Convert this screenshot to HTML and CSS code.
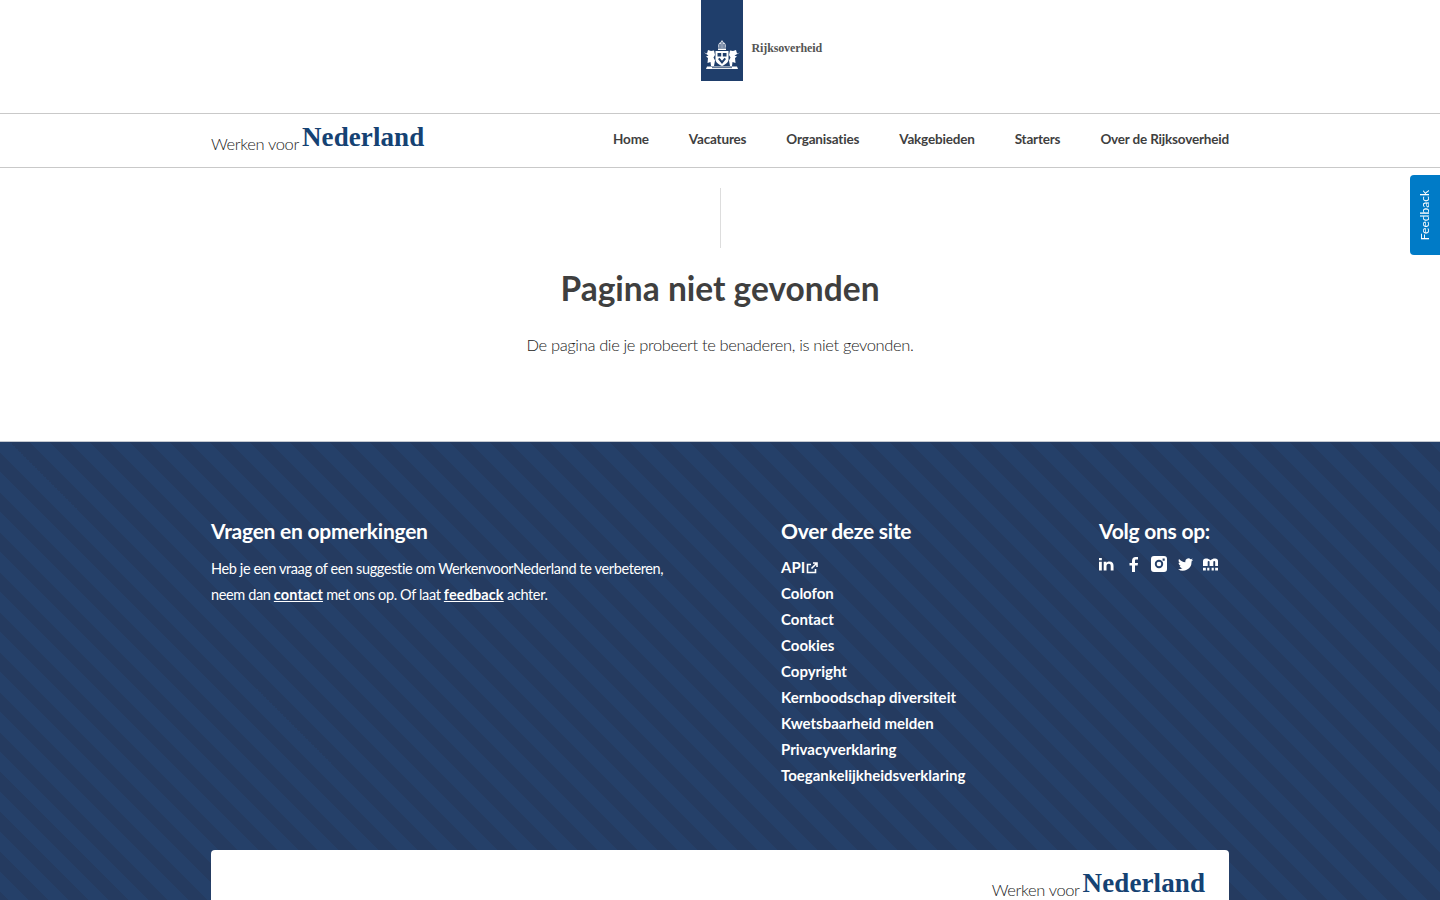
FILE: index.html
```html
<!DOCTYPE html>
<html lang="nl">
<head>
<meta charset="utf-8">
<title>Pagina niet gevonden</title>
<link rel="stylesheet" href="styles.css">
</head>
<body>
<div class="page">
  <header class="top">
    <div class="logo">
      <div class="lint">
        <svg class="crest" viewBox="0 0 36 32" width="36" height="32" aria-hidden="true">
          <path class="w soft" d="M14.500 9C13.500 6.500 14.500 4 16.500 3.300L18 1l1.500 2.300c2 .7 3 3.200 2 5.700z"/>
          <path class="b" d="M17.600 3h.8v6h-.8zM15.500 5h1v4h-1zM19.500 5h1v4h-1z"/>
          <path class="w" d="M14 9.500h8V11h-8z"/>
          <path class="w" d="M11.500 12h13v8.500c0 3-3.200 5-6.500 6.500-3.300-1.500-6.500-3.500-6.500-6.500z"/>
          <path class="b" d="M13.500 14h3.700v3.500h-3.700zM18.800 14h3.700v3.500h-3.700zM14 20l4 5 4-5-1.500-1.200-2.500 3-2.500-3z"/>
          <path class="w" d="M0 13.500l3 1 1-3.500 3 1 3-.5L11 16l-1.500 2.500 1.500 3-1 5.500H7L6.500 23l-3 1 .5-5-2-1.500 2.500-1z"/>
          <path class="w" d="M36 13.500l-3 1-1-3.500-3 1-3-.5L25 16l1.500 2.500-1.500 3 1 5.500h2l.5-4 3 1-.5-5 2-1.500-2.500-1z"/>
          <path class="w" d="M3 27.500h30l1 2.500H2z"/>
          <path class="b" d="M8 28.300h20v.8H8z"/>
        </svg>
      </div>
      <span class="logo-word">Rijksoverheid</span>
    </div>
  </header>
  <nav class="nav">
    <div class="wrap nav-in">
      <a class="brand" href="#"><span class="brand-a">Werken voor</span> <span class="brand-b">Nederland</span></a>
      <ul class="menu">
        <li>Home</li>
        <li>Vacatures</li>
        <li>Organisaties</li>
        <li>Vakgebieden</li>
        <li>Starters</li>
        <li>Over de Rijksoverheid</li>
      </ul>
    </div>
  </nav>
  <main class="main">
    <div class="rule"></div>
    <h1>Pagina niet gevonden</h1>
    <p>De pagina die je probeert te benaderen, is niet gevonden.</p>
  </main>
  <footer class="foot">
    <div class="wrap cols">
      <section class="col-a">
        <h2>Vragen en opmerkingen</h2>
        <p>Heb je een vraag of een suggestie om WerkenvoorNederland te verbeteren,<br>neem dan <a href="#">contact</a> met ons op. Of laat <a href="#">feedback</a> achter.</p>
      </section>
      <section class="col-b">
        <h2>Over deze site</h2>
        <ul>
          <li>API<svg class="ext" viewBox="0 0 12 12" width="12" height="12" aria-hidden="true"><path d="M9.500 7v3.500h-8v-8H5M7 1h4v4M11 1L5.500 6.500"/></svg></li>
          <li>Colofon</li>
          <li>Contact</li>
          <li>Cookies</li>
          <li>Copyright</li>
          <li>Kernboodschap diversiteit</li>
          <li>Kwetsbaarheid melden</li>
          <li>Privacyverklaring</li>
          <li>Toegankelijkheidsverklaring</li>
        </ul>
      </section>
      <section class="col-c">
        <h2>Volg ons op:</h2>
        <div class="social">
          <svg class="s-in" viewBox="0 0 16 14" width="15" height="14" aria-hidden="true"><path d="M0 4.500h3V14H0zM0 .5h3v2.600H0zM5 4.500h3v1.300C8.700 4.800 9.800 4.300 11.200 4.300c3 0 4.300 1.800 4.300 4.700v5h-3V9.300c0-1.600-.6-2.500-2-2.500S8 7.700 8 9.300V14H5z"/></svg>
          <svg class="s-fb" viewBox="0 0 9 15" width="9" height="15" aria-hidden="true"><path d="M3 15V8.500H.5V6H3V4c0-2.500 1.400-4 3.700-4H9v2.600H7.300C6.300 2.600 6 3 6 4v2h3l-.4 2.500H6V15z"/></svg>
          <svg class="s-ig" viewBox="0 0 16 16" width="16" height="16" aria-hidden="true"><path fill-rule="evenodd" d="M3 0h10a3 3 0 0 1 3 3v10a3 3 0 0 1-3 3H3a3 3 0 0 1-3-3V3a3 3 0 0 1 3-3zM8 3.800a4.200 4.200 0 1 0 0 8.400 4.200 4.200 0 0 0 0-8.400zM8 5.700a2.300 2.300 0 1 1 0 4.600 2.300 2.300 0 0 1 0-4.600zM11.600 2.500v2.200h2.100V2.500z"/></svg>
          <svg class="s-tw" viewBox="0 0 16 13" width="15" height="13" aria-hidden="true"><path d="M16 1.500c-.6.300-1.200.5-1.900.5.700-.4 1.200-1 1.400-1.800-.6.400-1.300.7-2 .8A3.300 3.300 0 0 0 7.900 4C5.200 3.900 2.800 2.600 1.100.6c-.9 1.500-.4 3.400 1 4.400-.5 0-1-.2-1.500-.4 0 1.600 1.100 3 2.600 3.300-.5.100-1 .2-1.500.1.400 1.300 1.600 2.200 3.100 2.300A6.600 6.600 0 0 1 0 11.600 9.300 9.300 0 0 0 14.400 3.300c.6-.5 1.200-1.100 1.600-1.800z"/></svg>
          <svg class="s-mu" viewBox="0 0 16 13" width="15" height="13" aria-hidden="true"><path d="M0 8V3a3 3 0 0 1 3-3h.5c1.500 0 2.900.6 4.500 2 1.600-1.400 3-2 4.500-2h.5a3 3 0 0 1 3 3v5h-3V3.500c0-.5-.4-.8-1-.8s-1 .3-1 .8V8H7V3.500c0-.5-.4-.8-1-.8s-1 .3-1 .8V8zM0 10h3v3H0zM4.500 10h2.300v3H4.500zM9.200 10h2.300v3H9.200zM13 10h3v3h-3z"/></svg>
        </div>
      </section>
    </div>
    <div class="wrap card">
      <a class="brand" href="#"><span class="brand-a">Werken voor</span> <span class="brand-b">Nederland</span></a>
    </div>
  </footer>
  <a class="feedback" href="#"><span>Feedback</span></a>
</div>
</body>
</html>
```
FILE: styles.css
```css
* { box-sizing: border-box; }
html, body { margin: 0; padding: 0; }
body { font-family: Lato, "Noto Sans", sans-serif; color: #3c3c3c; background: #fff; }
a { color: inherit; }
ul { list-style: none; margin: 0; padding: 0; }

.page { height: 100vh; overflow: hidden; display: flex; flex-direction: column; position: relative; }
.wrap { width: 1018px; margin: 0 auto; }

.top { height: 114px; flex: none; border-bottom: 1px solid #c9c9c9; display: flex; justify-content: center; }
.logo { display: flex; align-items: flex-start; margin-left: 83px; width: 122px; }
.lint { width: 42px; height: 81px; background: #1f3e6b; flex: none; display: flex; justify-content: center; padding-top: 39px; }
.crest { filter: blur(0.35px); }
.crest .w { fill: #fff; }
.crest .soft { fill: #d5dbe5; }
.crest .b { fill: #1f3e6b; }
.logo-word { font-family: "Liberation Serif", serif; font-size: 12px; color: #555; margin: 41px 0 0 9px; font-weight: 700; letter-spacing: -0.12px; }

.nav { height: 54px; flex: none; border-bottom: 1px solid #c9c9c9; }
.nav-in { display: flex; justify-content: space-between; height: 100%; align-items: center; }
.brand { text-decoration: none; display: inline-flex; align-items: baseline; gap: 3px; white-space: nowrap; }
.brand-a { font-size: 16.500px; font-weight: 300; color: #222; position: relative; top: 4px; letter-spacing: -0.35px; }
.brand-b { font-family: "Liberation Serif", serif; font-weight: 700; font-size: 27px; color: #154273; letter-spacing: 0.1px; }
.nav .brand { margin-top: -7px; }
.menu { display: flex; gap: 40px; font-size: 13.500px; font-weight: 700; color: #3f3f3f; letter-spacing: -0.18px; padding-bottom: 4px; }

.main { height: 273px; flex: none; display: flex; flex-direction: column; align-items: center; padding-top: 20px; }
.rule { width: 1px; height: 60px; background: #ddd; }
.main h1 { margin: 17px 0 0; font-size: 33.500px; line-height: 46px; font-weight: 700; color: #3f3f3f; }
.main p { margin: 22px 0 0; font-size: 16.500px; line-height: 24px; font-weight: 300; color: #222; letter-spacing: -0.36px; }

.foot {
  flex: 1; color: #fff; border-top: 1px solid #c4c8cf;
  background: repeating-linear-gradient(45deg, #254069 0 5.660px, #253b60 5.660px 19.800px, #254069 19.800px 28.284px);
  padding-top: 74px;
}
.cols { display: flex; height: 334px; }
.foot h2 { margin: 0; font-size: 21px; line-height: 30px; font-weight: 700; letter-spacing: -0.25px; }
.foot p { margin: 10px 0 0; font-size: 14.500px; line-height: 26px; letter-spacing: -0.37px; }
.foot p a { font-weight: 700; letter-spacing: 0.1px; }
.col-a { width: 570px; }
.col-b { width: 318px; }
.col-b ul { margin-top: 8px; font-size: 15px; line-height: 26px; font-weight: 700; }
.ext { margin-left: 1px; fill: none; stroke: #fff; stroke-width: 1.600; vertical-align: -1px; }
.social { display: flex; align-items: center; margin-top: 10px; }
.social svg { fill: #fff; display: block; flex: none; }
.s-fb { margin-left: 15px; }
.s-ig { margin-left: 13px; }
.s-tw { margin-left: 11px; }
.s-mu { margin-left: 10px; }

.card { height: 70px; background: #fff; border-radius: 4px 4px 0 0; display: flex; justify-content: flex-end; padding: 18px 24px 0 0; align-items: flex-start; }

.feedback { position: absolute; right: 0; top: 175px; width: 30px; height: 80px; background: #007bc7; border-radius: 4px 0 0 4px; color: #fff; text-decoration: none; display: flex; align-items: center; justify-content: center; }
.feedback span { writing-mode: vertical-rl; transform: rotate(180deg); font-size: 12px; margin-right: 2px; }
```
